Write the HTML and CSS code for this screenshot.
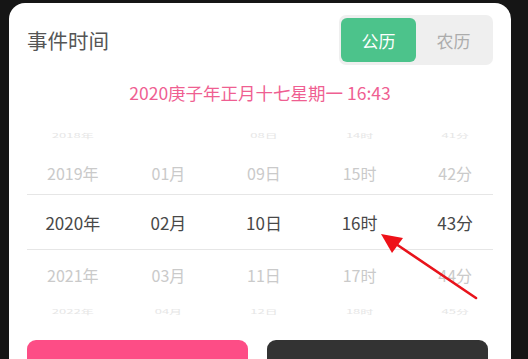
FILE: index.html
```html
<!DOCTYPE html>
<html lang="zh">
<head>
<meta charset="utf-8">
<link rel="stylesheet" href="styles.css">
</head>
<body>
<div class="card">
  <div class="header">
    <div class="title">事件时间</div>
    <div class="toggle">
      <div class="tab active">公历</div>
      <div class="tab">农历</div>
    </div>
  </div>
  <div class="date">2020庚子年正月十七星期一 16:43</div>
  <div class="picker">
    <div class="row far top"><span>2018年</span><span></span><span>08日</span><span>14时</span><span>41分</span></div>
    <div class="row near r1"><span>2019年</span><span>01月</span><span>09日</span><span>15时</span><span>42分</span></div>
    <div class="row sel"><span>2020年</span><span>02月</span><span>10日</span><span>16时</span><span>43分</span></div>
    <div class="row near r3"><span>2021年</span><span>03月</span><span>11日</span><span>17时</span><span>44分</span></div>
    <div class="row far bottom"><span>2022年</span><span>04月</span><span>12日</span><span>18时</span><span>45分</span></div>
    <div class="band"></div>
  </div>
  <div class="buttons">
    <div class="btn pink"></div>
    <div class="btn dark"></div>
  </div>
</div>
<svg class="arrow" width="528" height="359" viewBox="0 0 528 359">
  <line x1="476" y1="298" x2="396" y2="244" stroke="#e8131b" stroke-width="2.6" stroke-linecap="round"/>
  <polygon points="381,234 403,238 392,253" fill="#ee1118"/>
</svg>
</body>
</html>
```
FILE: styles.css
```css
html, body {
  margin: 0;
  padding: 0;
}
body {
  background: #151515;
  width: 528px;
  height: 359px;
  overflow: hidden;
  position: relative;
  font-family: "Noto Sans CJK SC", "Noto Sans", sans-serif;
}
.card {
  margin: 3px 0 0 9px;
  width: 502px;
  height: 400px;
  background: #fff;
  border-radius: 16px;
  box-sizing: border-box;
  padding: 12px 18px 0 18px;
}
.header {
  display: flex;
  align-items: center;
  justify-content: space-between;
  height: 50px;
}
.title {
  font-size: 20.5px;
  color: #555;
  line-height: 24px;
}
.toggle {
  display: flex;
  background: #efefef;
  border-radius: 7px;
  padding: 3px 2px;
  height: 50px;
  box-sizing: border-box;
  width: 154px;
}
.tab {
  flex: 1;
  display: flex;
  align-items: center;
  justify-content: center;
  font-size: 17px;
  color: #acacac;
  border-radius: 6px;
}
.tab.active {
  background: #4cc38b;
  color: #fff;
}
.date {
  margin-top: 16px;
  height: 24px;
  line-height: 24px;
  text-align: center;
  color: #ef5f92;
  font-size: 17.5px;
}
.picker {
  position: relative;
  margin: 13px -10px 0 -2px;
}
.row {
  display: grid;
  grid-template-columns: repeat(5, 1fr);
  align-items: center;
  text-align: center;
}
.row span {
  display: block;
}
.row.top { height: 34px; }
.row.r1 { height: 42px; }
.row.sel { height: 56px; }
.row.r3 { height: 50px; }
.row.bottom { height: 22px; }
.row.far {
  font-size: 13px;
  color: #e6e6e6;
}
.row.far span {
  transform: scaleY(0.45);
}
.row.near {
  font-size: 16px;
  color: #cacaca;
}
.row.sel {
  font-size: 17px;
  color: #484848;
}
.band {
  position: absolute;
  left: 2px;
  right: 10px;
  top: 76px;
  height: 56px;
  border-top: 1.5px solid #e6e6e6;
  border-bottom: 1.5px solid #e6e6e6;
  box-sizing: border-box;
}
.buttons {
  margin-top: 18px;
  display: grid;
  grid-template-columns: 221px 221px;
  column-gap: 19px;
}
.btn {
  height: 48px;
  border-radius: 9px;
}
.btn.pink { background: #fd4d86; }
.btn.dark { background: #333333; }
.arrow {
  position: absolute;
  left: 0;
  top: 0;
  pointer-events: none;
}
```
